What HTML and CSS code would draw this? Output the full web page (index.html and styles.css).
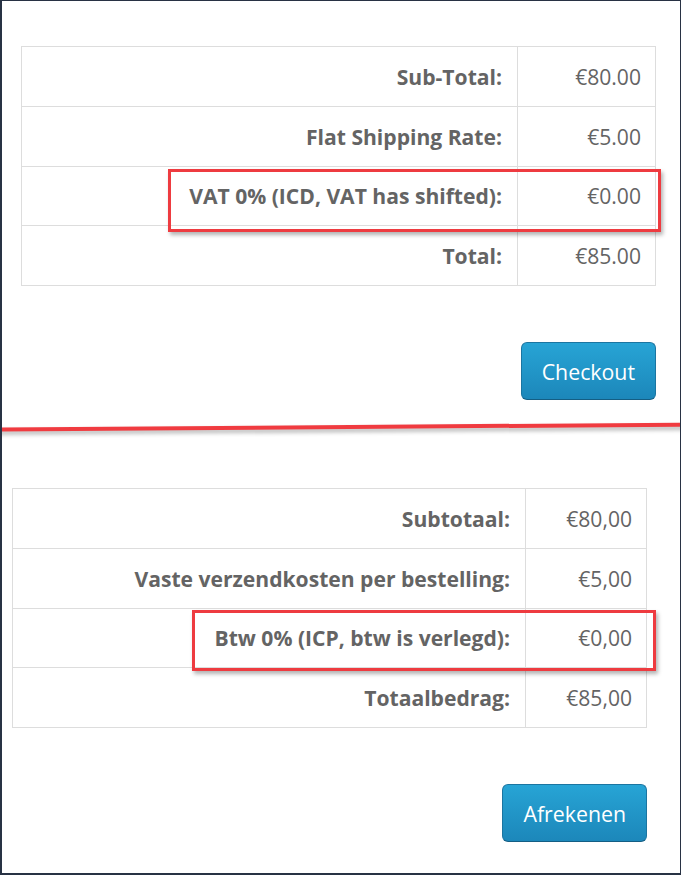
FILE: index.html
```html
<!DOCTYPE html>
<html lang="en">

<head>
    <meta charset="UTF-8">
    <title>Cart totals</title>
    <link rel="stylesheet" href="styles.css">
</head>

<body>
    <div class="frame">
        <div class="part part-en">
            <table class="totals">
                <tr>
                    <td class="label">Sub-Total:</td>
                    <td class="value">€80.00</td>
                </tr>
                <tr>
                    <td class="label">Flat Shipping Rate:</td>
                    <td class="value">€5.00</td>
                </tr>
                <tr>
                    <td class="label">VAT 0% (ICD, VAT has shifted):</td>
                    <td class="value">€0.00</td>
                </tr>
                <tr>
                    <td class="label">Total:</td>
                    <td class="value">€85.00</td>
                </tr>
            </table>
            <div class="actions">
                <button class="btn">Checkout</button>
            </div>
        </div>

        <div class="divider"></div>

        <div class="part part-nl">
            <table class="totals">
                <tr>
                    <td class="label">Subtotaal:</td>
                    <td class="value">€80,00</td>
                </tr>
                <tr>
                    <td class="label">Vaste verzendkosten per bestelling:</td>
                    <td class="value">€5,00</td>
                </tr>
                <tr>
                    <td class="label">Btw 0% (ICP, btw is verlegd):</td>
                    <td class="value">€0,00</td>
                </tr>
                <tr>
                    <td class="label">Totaalbedrag:</td>
                    <td class="value">€85,00</td>
                </tr>
            </table>
            <div class="actions">
                <button class="btn">Afrekenen</button>
            </div>
        </div>

        <!-- red marker boxes drawn over the VAT rows -->
        <div class="highlight highlight-en"></div>
        <div class="highlight highlight-nl"></div>
    </div>
</body>

</html>
```

FILE: styles.css
```css
body {
    margin: 0;
    font-family: "Open Sans", Arial, sans-serif;
}

.frame {
    position: relative;
    width: 681px;
    height: 875px;
    box-sizing: border-box;
    border: 1px solid #283244;
    border-left-width: 2px;
    border-bottom-width: 2px;
    background: #fff;
    overflow: hidden;
}

.part-en {
    padding: 45px 0 0 19px;
    height: 379px;
}

.part-nl {
    padding: 59px 0 0 10px;
}

.totals {
    width: 635px;
    border-collapse: collapse;
}

.totals td {
    height: 58.75px;
    padding: 0 14px;
    border: 1px solid #ddd;
    text-align: right;
    font-size: 21.1px;
    color: #646464;
}

.totals .label {
    font-weight: bold;
    padding-right: 15px;
}

.part-en .value {
    width: 109px;
}

.part-nl .value {
    width: 92px;
}

.actions {
    display: flex;
    justify-content: flex-end;
    width: 635px;
    margin-top: 56px;
}

.btn {
    height: 58px;
    padding: 0 20px;
    border: 1px solid #1b75a1;
    border-bottom-color: #145e84;
    border-radius: 6px;
    background: linear-gradient(#27a4d5, #1c87ba);
    color: #fff;
    font-family: inherit;
    font-size: 21.3px;
}

.divider {
    height: 4px;
    margin-left: -4px;
    width: 700px;
    background: #f03b40;
    box-shadow: 0 3px 4px rgba(0, 0, 0, 0.3);
    transform: rotate(-0.4deg);
}

.highlight {
    position: absolute;
    border: 3px solid #ee3b40;
    box-shadow: 2px 3px 4px rgba(0, 0, 0, 0.3);
}

.highlight-en {
    left: 166px;
    top: 168px;
    width: 487px;
    height: 57px;
}

.highlight-nl {
    left: 190px;
    top: 609px;
    width: 458px;
    height: 55px;
}
```
